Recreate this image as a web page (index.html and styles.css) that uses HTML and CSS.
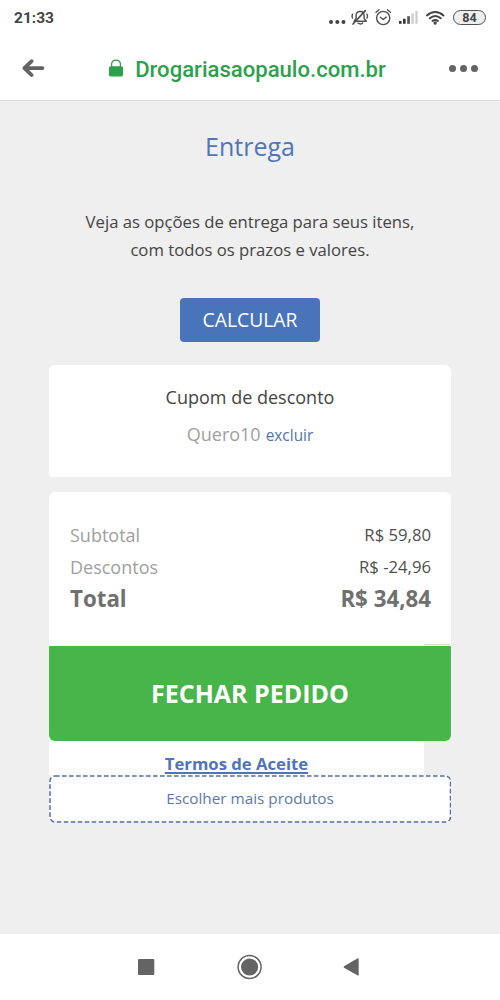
FILE: index.html
```html
<!DOCTYPE html>
<html lang="pt-BR">
<head>
<meta charset="utf-8">
<title>Drogaria São Paulo - Carrinho</title>
<link rel="stylesheet" href="styles.css">
</head>
<body>
<div class="screen">
  <div class="status">
    <span class="clock">21:33</span>
    <div class="status-icons">
      <svg width="158" height="24" viewBox="328 6 158 24" fill="none" stroke="#505050" stroke-linecap="round" stroke-linejoin="round">
        <g fill="#444" stroke="none"><circle cx="331" cy="22" r="2"/><circle cx="337.3" cy="22" r="2"/><circle cx="343.5" cy="22" r="2"/></g>
        <g stroke-width="1.4">
          <path d="M354 21.3h12.3l-2.2-2.800v-3c0-2.300-1.400-4-4-4s-4 1.700-4 4v3L354 21.300"/>
          <path d="M358 23.200l2.600.9 2-1M352.500 14.200l-.5 2 .5 1.800M367 14.200l.6 2-.6 1.800"/>
          <path d="M353 24L365.300 10.600" stroke-width="1.700"/>
        </g>
        <g stroke-width="1.4">
          <circle cx="383.200" cy="18" r="6.600"/><path d="M380.300 17.300l2.900 2.200 3-2.400M376 12.300l3-2.500M390.400 12.300l-3-2.500"/>
        </g>
        <g stroke="none"><path fill="#333" d="M399 21h2.600v2.800H399zM403 18.800h2.600v5H403z"/><path fill="#555" d="M407.200 16.200h2.700v7.600h-2.700z"/><path fill="#ccc" d="M411.400 13.600h2.400v10.200h-2.400zM415.400 11h2.200v12.800h-2.200z"/></g>
        <g stroke="#444" stroke-width="2"><path d="M427 15.400c5-4.400 11.500-4.400 16.500 0"/><path d="M429.800 18.300c3.400-2.900 7.500-2.900 10.900 0"/><path d="M432.500 21c1.800-1.400 3.700-1.400 5.500 0"/><circle cx="435.200" cy="23" r=".7"/></g>
      </svg>
      <span class="battery">84</span>
    </div>
  </div>
  <div class="toolbar">
    <svg class="back" width="24" height="20" viewBox="0 0 24 20" fill="none" stroke="#646464" stroke-width="3.700" stroke-linecap="round" stroke-linejoin="round"><path d="M21.500 10.100H4M10.700 3.100L3.300 10.100l7.400 7"/></svg>
    <div class="site">
      <svg width="14" height="18" viewBox="0 0 14 18"><path d="M2.600 8V5.300C2.600 2.800 4.300 1.200 7 1.200s4.400 1.600 4.400 4.100V8" fill="none" stroke="#2ba14b" stroke-width="1.300"/><rect y="7.200" width="14" height="10.200" rx="1.600" fill="#2ba14b"/></svg>
      <span class="url">Drogariasaopaulo.com.br</span>
    </div>
    <div class="more"><i></i><i></i><i></i></div>
  </div>
  <main class="content">
    <h1 class="title">Entrega</h1>
    <p class="intro">Veja as opções de entrega para seus itens,<br>com todos os prazos e valores.</p>
    <button class="calc">CALCULAR</button>
    <section class="coupon">
      <div class="coupon-title">Cupom de desconto</div>
      <div class="coupon-code"><span class="code">Quero10</span><a class="remove">excluir</a></div>
    </section>
    <section class="summary">
      <div class="row"><span class="label">Subtotal</span><span class="value">R$ 59,80</span></div>
      <div class="row"><span class="label">Descontos</span><span class="value">R$ -24,96</span></div>
      <div class="row total"><span>Total</span><span class="sum">R$ 34,84</span></div>
      <div class="rule"></div>
    </section>
    <button class="checkout">FECHAR PEDIDO</button>
    <div class="terms"><a>Termos de Aceite</a></div>
    <div class="choose">
      <svg class="dashes" width="402" height="48"><rect x="1" y="1" width="400.500" height="46" rx="5"/></svg>
      <span>Escolher mais produtos</span>
    </div>
  </main>
  <nav class="system">
    <svg width="232" height="30" viewBox="134 952 232 30" fill="#646464"><rect x="138" y="959" width="16.300" height="16" rx="1"/><circle cx="249.600" cy="967" r="8.600"/><circle cx="249.600" cy="967" r="11.500" fill="none" stroke="#646464" stroke-width="1.500"/><path d="M344 966.200L357.700 958.300q1-.5 1 .6V974.800q0 1.100-1 .6L344 967.700q-1-.7 0-1.500z"/></svg>
  </nav>
</div>
</body>
</html>
```
FILE: styles.css
```css
* { box-sizing: border-box; }
body { margin: 0; font-family: "Open Sans", "Noto Sans", sans-serif; }
button { border: 0; padding: 0; font-family: inherit; }
.screen { width: 500px; height: 1000px; display: flex; flex-direction: column; background: #fff; overflow: hidden; white-space: nowrap; }
.status { height: 36px; display: flex; justify-content: space-between; padding: 6px 14px 0; }
.clock { font: 700 15.5px/24px Roboto, sans-serif; color: #444; }
.status-icons { position: relative; height: 24px; }
.battery { position: absolute; right: 0; top: 4px; width: 33px; height: 15px; border: 1.5px solid #505050; border-radius: 8px; background: #eee; font: 700 12.5px/14px Roboto, sans-serif; color: #444; text-align: center; }
.toolbar { height: 65px; border-bottom: 1px solid #dadada; display: flex; justify-content: space-between; align-items: center; padding: 0 22px 0 21px; }
.site { display: flex; align-items: center; gap: 12px; margin-left: 1px; }
.url { font: 500 22.1px/28px Roboto, sans-serif; color: #2ba14b; padding-top: 2px; }
.more { display: flex; gap: 4px; }
.more i { width: 7px; height: 7px; border-radius: 50%; background: #646464; }
.content { height: 833px; background: #efefef; padding: 25px 49px 0; display: flex; flex-direction: column; align-items: center; }
.title { margin: 0; font-size: 25px; line-height: 40px; font-weight: 400; color: #5175b8; }
.intro { margin: 42px 0 0; font-size: 16.7px; line-height: 28px; text-align: center; color: #444; }
.calc { margin-top: 34px; width: 140px; height: 44px; flex: none; border-radius: 4px; background: #4a74ba; color: #fff; font-size: 19.3px; line-height: 44px; }
.coupon { margin-top: 23px; width: 402px; height: 112px; flex: none; background: #fff; border-radius: 6px 6px 2px 2px; padding-top: 18px; text-align: center; color: #444; font-size: 18px; line-height: 28px; }
.coupon-code { display: flex; justify-content: center; align-items: baseline; gap: 5px; margin-top: 9px; }
.code { color: #a0a0a0; }
.remove { color: #5175a8; font-size: 15.4px; }
.summary { margin-top: 15px; width: 402px; height: 154px; flex: none; background: #fff; border-radius: 6px 6px 0 0; padding: 27px 20px 0 21px; display: flex; flex-direction: column; }
.row { height: 32px; line-height: 32px; display: flex; justify-content: space-between; }
.label { color: #a0a0a0; font-size: 18px; }
.value { color: #505050; font-size: 16.7px; }
.total { font-weight: 700; font-size: 22.3px; line-height: 32px; color: #707070; }
.rule { width: 27px; height: 1px; margin: 29px -20px 0 auto; background: #dcdcdc; }
.checkout { position: relative; z-index: 1; width: 402px; height: 95px; flex: none; background: #48b54a; border-radius: 1px 1px 6px 6px; color: #fff; font-weight: 700; font-size: 25px; line-height: 92px; padding-bottom: 2px; }
.terms { width: 375px; height: 38px; margin-top: -4px; align-self: flex-start; background: #fff; text-align: center; font-weight: 700; font-size: 16.7px; line-height: 54px; color: #5175b8; }
.terms a { text-decoration: underline; text-decoration-thickness: 1.5px; text-underline-offset: 2px; }
.choose { position: relative; width: 402px; height: 48px; flex: none; background: #fff; border-radius: 6px; text-align: center; font-size: 15.3px; line-height: 47px; color: #5b79ad; }
.dashes { position: absolute; left: 0; top: 0; fill: none; stroke: #526daa; stroke-width: 1.5px; stroke-dasharray: 4.6 2.4; }
.system { height: 66px; display: flex; padding: 18px 134px; }
```
